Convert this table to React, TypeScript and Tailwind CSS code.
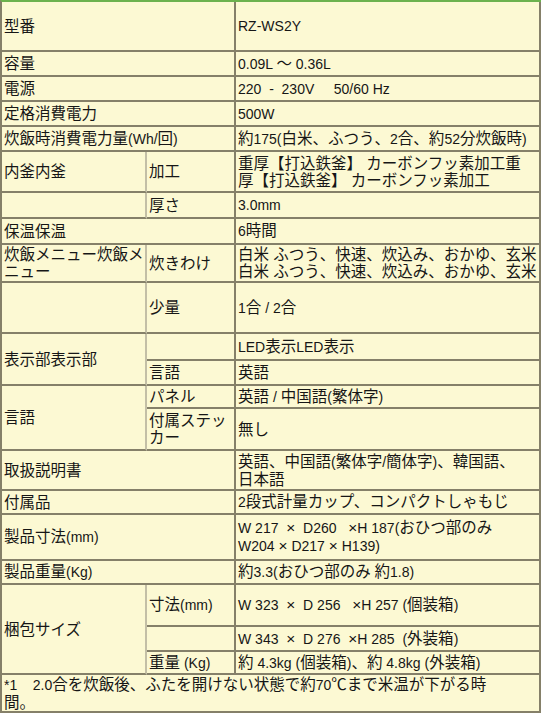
import type { ReactNode } from 'react'

// ASCII runs are drawn a bit smaller, like the bitmap gothic of the original
function t(s: string) {
  return s.split(/([ -~]+)/).map((part, i) =>
    /^[ -~]+$/.test(part) ? (
      <span key={i} className="text-[14px]">{part}</span>
    ) : (
      <span key={i}>{part}</span>
    )
  )
}

interface CellProps {
  children?: ReactNode
  className?: string
  light?: boolean
}

function Cell({ children, className = '', light = false }: CellProps) {
  return (
    <div
      className={`flex items-center overflow-hidden whitespace-pre border-b-2 border-r-2 border-b-[#858069] pl-[2px] ${
        light ? 'border-r-[#c3bfa6]' : 'border-r-[#858069]'
      } ${className}`}
    >
      <div>{children}</div>
    </div>
  )
}

export default function App() {
  return (
    <div className="w-[550px] bg-white font-['Liberation_Sans','Noto_Sans_CJK_JP',sans-serif] text-[15.5px] leading-[17px] text-[#161616]">
      <div className="grid w-[541px] grid-cols-[145px_89px_305px] grid-rows-[50px_25px_25px_25px_25px_41px_26px_26px_38px_51px_27px_25px_23px_42px_40px_24px_46px_24px_42px_25px_23px_38px] border-l-2 border-t-2 border-l-[#858069] border-t-[#6cb24e] bg-[#fcf9d3]">
        <Cell className="col-span-2">型番</Cell>
        <Cell>{t('RZ-WS2Y')}</Cell>

        <Cell className="col-span-2">容量</Cell>
        <Cell>{t('0.09L ～ 0.36L')}</Cell>

        <Cell className="col-span-2">電源</Cell>
        <Cell>{t('220  -  230V     50/60 Hz')}</Cell>

        <Cell className="col-span-2">定格消費電力</Cell>
        <Cell>{t('500W')}</Cell>

        <Cell className="col-span-2">{t('炊飯時消費電力量(Wh/回)')}</Cell>
        <Cell>{t('約175(白米、ふつう、2合、約52分炊飯時)')}</Cell>

        <Cell light>内釜内釜</Cell>
        <Cell>加工</Cell>
        <Cell>
          {'重厚【打込鉄釜】 カーボンフッ素加工重'}
          <br />
          {'厚【打込鉄釜】 カーボンフッ素加工'}
        </Cell>

        <Cell light />
        <Cell>厚さ</Cell>
        <Cell>{t('3.0mm')}</Cell>

        <Cell className="col-span-2">保温保温</Cell>
        <Cell>{t('6時間')}</Cell>

        <Cell light>
          炊飯メニュー炊飯メ
          <br />
          ニュー
        </Cell>
        <Cell>炊きわけ</Cell>
        <Cell>
          {'白米 ふつう、快速、炊込み、おかゆ、玄米'}
          <br />
          {'白米 ふつう、快速、炊込み、おかゆ、玄米'}
        </Cell>

        <Cell light />
        <Cell>少量</Cell>
        <Cell>{t('1合 / 2合')}</Cell>

        <Cell light className="row-span-2">表示部表示部</Cell>
        <Cell />
        <Cell>{t('LED表示LED表示')}</Cell>
        <Cell>言語</Cell>
        <Cell>英語</Cell>

        <Cell light className="row-span-2">言語</Cell>
        <Cell>パネル</Cell>
        <Cell>{t('英語 / 中国語(繁体字)')}</Cell>
        <Cell>
          付属ステッ
          <br />
          カー
        </Cell>
        <Cell>無し</Cell>

        <Cell className="col-span-2">取扱説明書</Cell>
        <Cell>
          {t('英語、中国語(繁体字/簡体字)、韓国語、')}
          <br />
          日本語
        </Cell>

        <Cell className="col-span-2">付属品</Cell>
        <Cell>{t('2段式計量カップ、コンパクトしゃもじ')}</Cell>

        <Cell className="col-span-2">{t('製品寸法(mm)')}</Cell>
        <Cell>
          {t('W 217  ×  D260   ×H 187(おひつ部のみ')}
          <br />
          {t('W204 × D217 × H139)')}
        </Cell>

        <Cell className="col-span-2">{t('製品重量(Kg)')}</Cell>
        <Cell>{t('約3.3(おひつ部のみ 約1.8)')}</Cell>

        <Cell light className="row-span-3">梱包サイズ</Cell>
        <Cell>{t('寸法(mm)')}</Cell>
        <Cell>{t('W 323  ×  D 256   ×H 257 (個装箱)')}</Cell>
        <Cell />
        <Cell>{t('W 343  ×  D 276  ×H 285  (外装箱)')}</Cell>
        <Cell>{t('重量 (Kg)')}</Cell>
        <Cell>{t('約 4.3kg (個装箱)、約 4.8kg (外装箱)')}</Cell>

        <Cell className="col-span-3">
          {t('*1    2.0合を炊飯後、ふたを開けない状態で約70℃まで米温が下がる時')}
          <br />
          間。
        </Cell>
      </div>
    </div>
  )
}
